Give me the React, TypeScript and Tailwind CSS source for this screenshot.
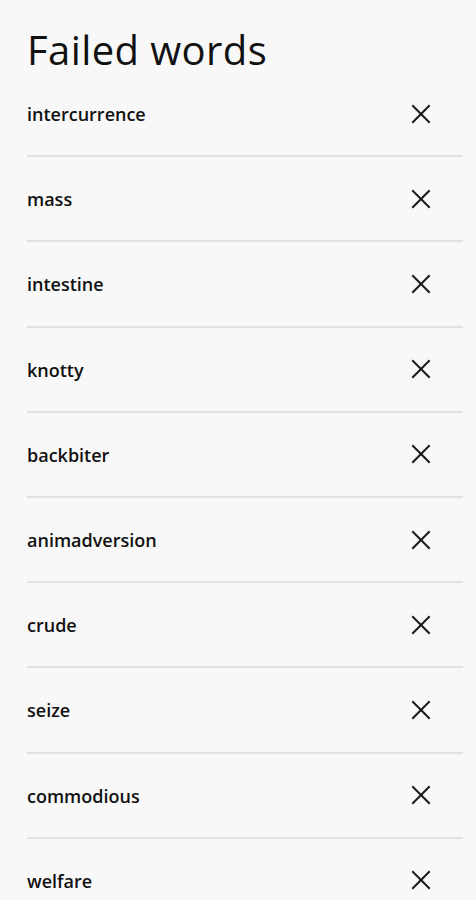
const words = [
  "intercurrence",
  "mass",
  "intestine",
  "knotty",
  "backbiter",
  "animadversion",
  "crude",
  "seize",
  "commodious",
  "welfare",
]

function CloseIcon() {
  return (
    <svg width="20" height="20" viewBox="0 0 20 20" fill="none" stroke="#1a1a1a" strokeWidth="2" strokeLinecap="square">
      <line x1="2" y1="2" x2="18" y2="18" />
      <line x1="18" y1="2" x2="2" y2="18" />
    </svg>
  )
}

export default function App() {
  return (
    <div className="min-h-[900px] bg-[#f8f8f8] pl-[27px] pr-[13px] font-['Open_Sans',sans-serif] text-[#111]">
      <h1 className="h-[72px] pt-[28px] text-[40px] leading-[44px] font-normal tracking-[0.4px]">Failed words</h1>
      <ul>
        {words.map((w) => (
          <li key={w} className="flex h-[85.2px] items-center justify-between border-b-2 border-[#e2e2e2]">
            <span className="pt-[2px] text-[18px] font-semibold">{w}</span>
            <button type="button" className="mr-[32px] flex items-center justify-center">
              <CloseIcon />
            </button>
          </li>
        ))}
      </ul>
    </div>
  )
}
